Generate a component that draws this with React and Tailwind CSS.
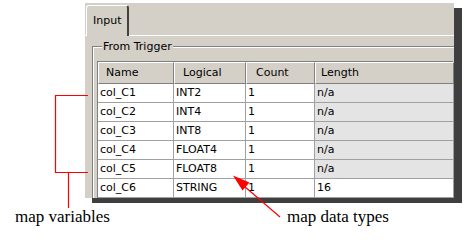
import React from "react";

const rows = [
  ["col_C1", "INT2", "1", "n/a"],
  ["col_C2", "INT4", "1", "n/a"],
  ["col_C3", "INT8", "1", "n/a"],
  ["col_C4", "FLOAT4", "1", "n/a"],
  ["col_C5", "FLOAT8", "1", "n/a"],
  ["col_C6", "STRING", "1", "16"],
];

const headers = [
  { label: "Name", pad: "pl-[7px]" },
  { label: "Logical", pad: "pl-[8px]" },
  { label: "Count", pad: "pl-[9px]" },
  { label: "Length", pad: "pl-[5px]" },
];

function Grid() {
  return (
    <div className="w-[356px] border-t border-l border-[#808080] grid grid-cols-[76px_72px_69px_139px]">
      {headers.map((h) => (
        <div
          key={h.label}
          className={`h-[22px] flex items-center bg-[#d4d0c8] border-t border-l border-t-white border-l-white border-r border-b border-r-[#808080] border-b-[#808080] ${h.pad}`}
        >
          {h.label}
        </div>
      ))}
      {rows.map((r, i) =>
        r.map((cell, j) => (
          <div
            key={i + "-" + j}
            className={`h-[19px] flex items-center pl-[2px] border-r border-b border-[#a0a0a0] ${
              j === 3 && i < 5 ? "bg-[#e4e4e4]" : "bg-white"
            }`}
          >
            {cell}
          </div>
        ))
      )}
    </div>
  );
}

function Annotations() {
  return (
    <>
      <svg className="absolute inset-0 pointer-events-none" width="468" height="245">
        <g stroke="#ff0000" strokeWidth="1.2" fill="none">
          <path d="M88 95.5 H55.5 V172.5 H88" />
          <path d="M68.5 172.5 V208" />
          <path d="M280 217 L244 186" />
        </g>
        <polygon points="233,175.5 249.5,182.5 242.5,190.5" fill="#ff0000" />
      </svg>
      <div className="absolute left-[15px] top-[208px] text-[17px] leading-none text-black font-['Liberation_Serif',serif]">
        map variables
      </div>
      <div className="absolute left-[287px] top-[208px] text-[17px] leading-none text-black font-['Liberation_Serif',serif]">
        map data types
      </div>
    </>
  );
}

export default function App() {
  return (
    <div className="relative w-[468px] h-[245px] bg-white overflow-hidden pt-[3px]">
      <div className="ml-[84px] w-[370px] h-[195px] bg-[#d4d0c8] border-l border-white shadow-[8px_5px_0_#3f3f3f] overflow-hidden text-[11px] text-black font-['DejaVu_Sans',sans-serif]">
        <div className="h-[33px] flex items-end">
          <div className="w-[1px] h-[1px] border-b border-white" />
          <div className="w-[43px] h-[31px] flex items-center pl-[6px] border-t border-l border-white border-r-2 border-r-[#404040] rounded-t-[3px]">
            Input
          </div>
          <div className="flex-1 border-b border-white" />
        </div>
        <fieldset className="ml-[7px] mt-[4px] w-[400px] border-t border-l border-[#808080] shadow-[inset_1px_1px_0_white] pl-[4px] pt-[8px]">
          <legend className="ml-[5px] px-[1px] bg-[#d4d0c8] leading-[13px]">From Trigger</legend>
          <Grid />
        </fieldset>
      </div>
      <Annotations />
    </div>
  );
}
